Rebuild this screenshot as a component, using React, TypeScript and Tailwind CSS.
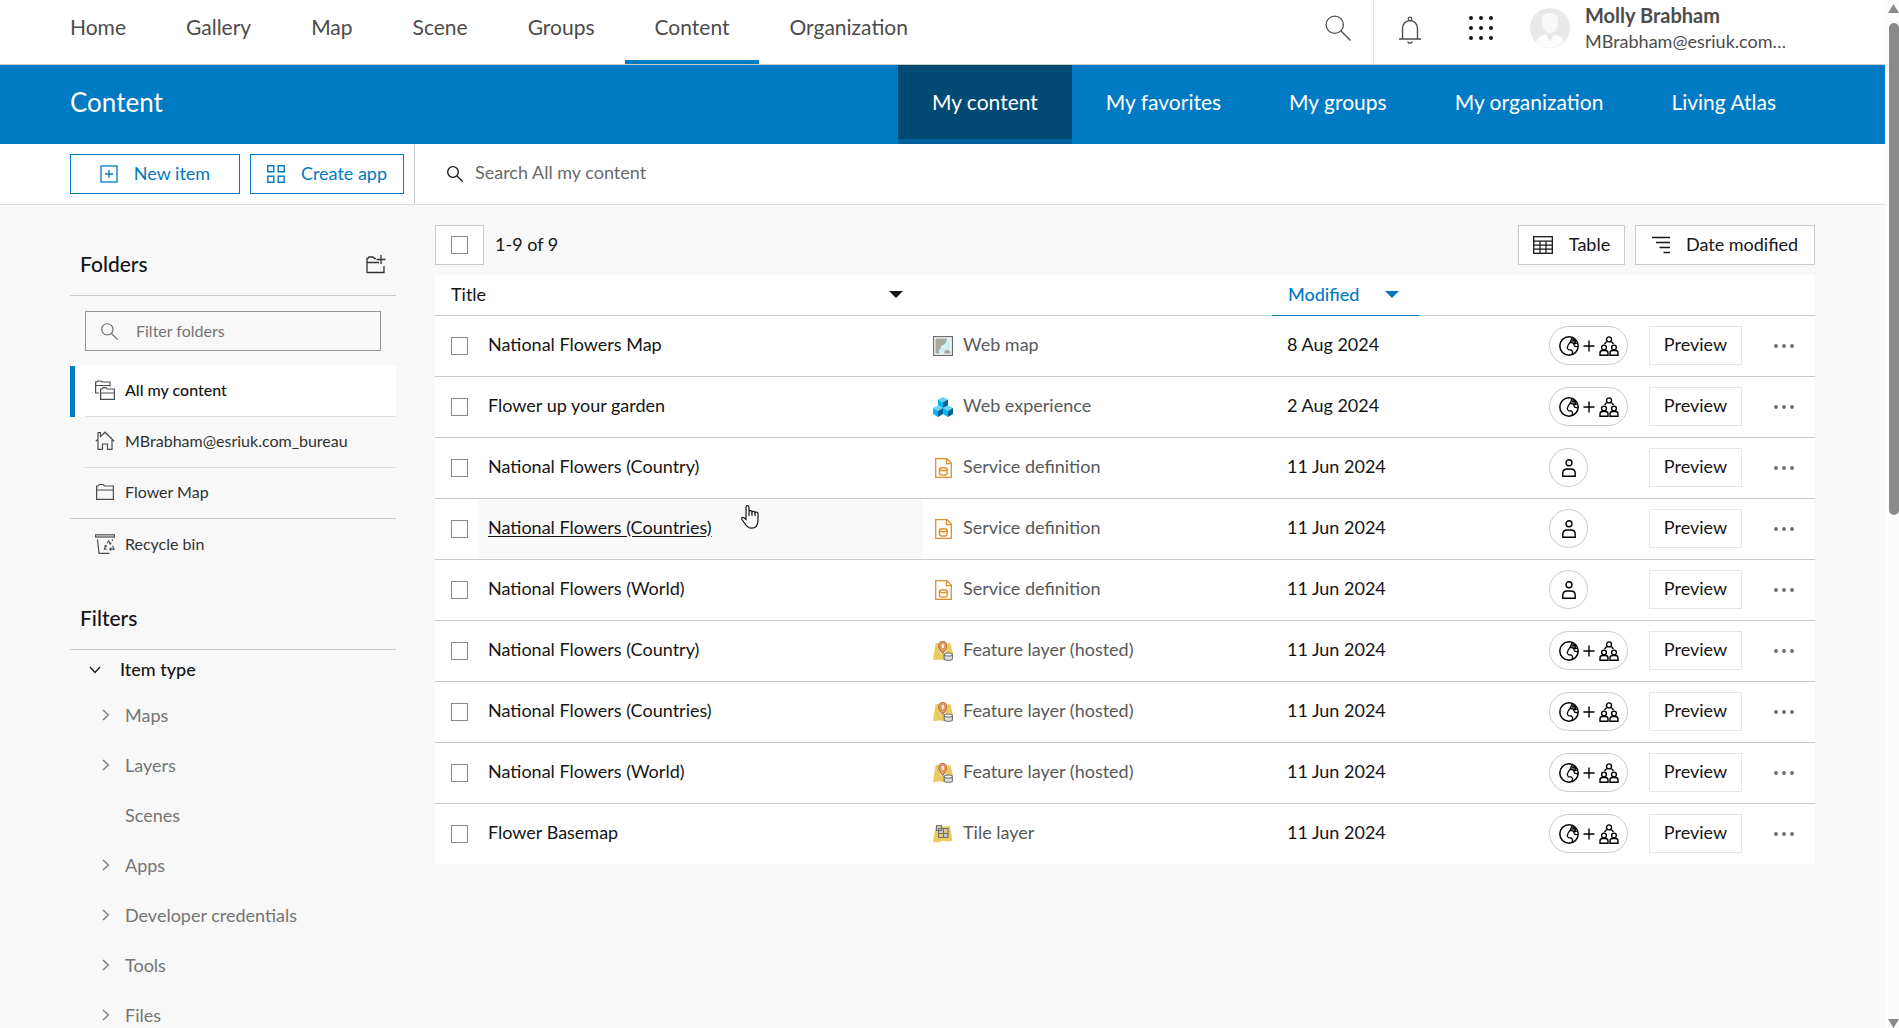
import type { ReactNode } from "react";

type ItemKind = "Web map" | "Web experience" | "Service definition" | "Feature layer (hosted)" | "Tile layer";

interface Item {
  title: string;
  kind: ItemKind;
  modified: string;
  shared: boolean;
  hovered?: boolean;
}

const items: Item[] = [
  { title: "National Flowers Map", kind: "Web map", modified: "8 Aug 2024", shared: true },
  { title: "Flower up your garden", kind: "Web experience", modified: "2 Aug 2024", shared: true },
  { title: "National Flowers (Country)", kind: "Service definition", modified: "11 Jun 2024", shared: false },
  { title: "National Flowers (Countries)", kind: "Service definition", modified: "11 Jun 2024", shared: false, hovered: true },
  { title: "National Flowers (World)", kind: "Service definition", modified: "11 Jun 2024", shared: false },
  { title: "National Flowers (Country)", kind: "Feature layer (hosted)", modified: "11 Jun 2024", shared: true },
  { title: "National Flowers (Countries)", kind: "Feature layer (hosted)", modified: "11 Jun 2024", shared: true },
  { title: "National Flowers (World)", kind: "Feature layer (hosted)", modified: "11 Jun 2024", shared: true },
  { title: "Flower Basemap", kind: "Tile layer", modified: "11 Jun 2024", shared: true },
];

const siteLinks = ["Home", "Gallery", "Map", "Scene", "Groups", "Content", "Organization"];
const contentTabs = ["My content", "My favorites", "My groups", "My organization", "Living Atlas"];

const itemTypes = [
  { label: "Maps", expandable: true },
  { label: "Layers", expandable: true },
  { label: "Scenes", expandable: false },
  { label: "Apps", expandable: true },
  { label: "Developer credentials", expandable: true },
  { label: "Tools", expandable: true },
  { label: "Files", expandable: true },
];

function Svg({ box, className, children }: { box: string; className: string; children: ReactNode }) {
  return (
    <svg viewBox={box} className={`shrink-0 ${className}`} fill="none" stroke="currentColor" aria-hidden="true">
      {children}
    </svg>
  );
}

const MagnifierIcon = ({ className, weight = 1.2 }: { className: string; weight?: number }) => (
  <Svg box="0 0 24 24" className={className}>
    <circle cx="9" cy="9" r="8" strokeWidth={weight} />
    <path d="M14.8 14.8 23.5 23.5" strokeWidth={weight} />
  </Svg>
);

const BellIcon = () => (
  <Svg box="0 0 24 28" className="h-7 w-6">
    <path d="M1 23h22M4.5 23V12.5a7.5 8 0 0 1 15 0V23" strokeWidth="1.4" />
    <circle cx="12" cy="3" r="1.8" strokeWidth="1.2" />
    <path d="M10 25.5a2 1.6 0 0 0 4 0" strokeWidth="1.4" />
  </Svg>
);

const AppGridIcon = () => (
  <Svg box="0 0 26 26" className="h-[26px] w-[26px]">
    {[3, 13, 23].map((y) =>
      [3, 13, 23].map((x) => <circle key={`${x}-${y}`} cx={x} cy={y} r="2" fill="currentColor" stroke="none" />),
    )}
  </Svg>
);

const Avatar = () => (
  <Svg box="0 0 40 40" className="h-10 w-10">
    <circle cx="20" cy="20" r="20" fill="#e9e9e9" stroke="none" />
    <path d="M12 14c-1-6 3-9 8-9s9 3 8 9c0 6-3 11-8 11s-8-5-8-11Z" fill="#f8f8f8" stroke="none" />
    <path d="M6 34c1-5 5-6 10-8l4 8 4-8c5 2 9 3 10 8a20 20 0 0 1-28 0Z" fill="#fcfcfc" stroke="none" />
  </Svg>
);

const PlusSquareIcon = () => (
  <Svg box="0 0 18 18" className="h-[18px] w-[18px]">
    <rect x="1" y="1" width="16" height="16" strokeWidth="1.3" />
    <path d="M9 5v8M5 9h8" strokeWidth="1.3" />
  </Svg>
);

const TilesIcon = () => (
  <Svg box="0 0 18 18" className="h-[18px] w-[18px]">
    <path d="M.8.8h6v6h-6zM11.2.8h6v6h-6zM.8 11.2h6v6h-6zM11.2 11.2h6v6h-6z" strokeWidth="1.4" />
  </Svg>
);

const NewFolderIcon = () => (
  <Svg box="0 0 20 20" className="h-5 w-5">
    <path d="M10 4.5H8.5L7 3H3L2 4.5H1v14h17V12M1.5 8.5H13" strokeWidth="1.3" />
    <path d="M15 1v9M10.5 5.5h9" strokeWidth="1.3" />
  </Svg>
);

const FoldersIcon = () => (
  <Svg box="0 0 20 20" className="h-5 w-5">
    <path d="M4 13H.6V2H2l1-1h3l1 1h8v4.5M.6 5.5H15" strokeWidth="1.2" />
    <path d="M5.6 19.4V9H7l1-1.4h3L12 9h7.4v10.4zM5.6 13h13.8" strokeWidth="1.2" />
  </Svg>
);

const HomeIcon = () => (
  <Svg box="0 0 20 20" className="h-5 w-5">
    <path d="m.8 10.2 2.2-2V1.6h2.5v4L10 1.2l9.2 9M3 9v9.4h4.5V13h5v5.4H17V9" strokeWidth="1.2" />
  </Svg>
);

const FolderIcon = () => (
  <Svg box="0 0 20 20" className="h-5 w-5">
    <path d="M1.6 17.4V4H3l1.2-1.5h4L9.5 4h8.9v13.4zM1.6 8h16.8" strokeWidth="1.2" />
  </Svg>
);

const RecycleBinIcon = () => (
  <Svg box="0 0 20 20" className="h-5 w-5">
    <rect x=".6" y=".8" width="18.8" height="2.2" strokeWidth="1.2" />
    <path d="M2.5 5.5 4 19.4h10.5M17.4 5.5V7" strokeWidth="1.2" />
    <path
      d="m12 9.2 1.6-2.2 1.8 2.6M16 8.6l-.4 1.4-1.5-.3M10.6 11.5l-1.2 3.6h2.2M9.4 12.5l1.4-1 1 1.3M17.5 11.8l1.6 3.3h-4.3M16.2 13.6l-1.4 1.5 1.4 1.6"
      strokeWidth="1.1"
    />
  </Svg>
);

const ChevronRightIcon = () => (
  <Svg box="0 0 8 12" className="h-3 w-2">
    <path d="m1 1 5.5 5L1 11" strokeWidth="1.2" />
  </Svg>
);

const ChevronDownIcon = () => (
  <Svg box="0 0 12 8" className="h-2 w-3">
    <path d="m1 1 5 5.5L11 1" strokeWidth="1.2" />
  </Svg>
);

const CaretIcon = () => (
  <Svg box="0 0 14 7" className="h-[7px] w-[14px]">
    <path d="M0 0h14L7 7z" fill="currentColor" stroke="none" />
  </Svg>
);

const TableIcon = () => (
  <Svg box="0 0 20 18" className="h-[18px] w-5">
    <rect x=".7" y=".7" width="18.6" height="16.6" strokeWidth="1.3" />
    <path d="M1 5.2h18M1 9.2h18M1 13.2h18M7 5v12M13 5v12" strokeWidth="1.2" />
  </Svg>
);

const SortIcon = () => (
  <Svg box="0 0 18 18" className="h-[18px] w-[18px]">
    <path d="M0 1.5h18M4 6.5h14M7.5 11.5H18M11.5 16.5H18" strokeWidth="1.3" />
  </Svg>
);

const GlobeIcon = () => (
  <Svg box="0 0 20 20" className="h-5 w-5">
    <circle cx="10" cy="10" r="9.2" strokeWidth="1.5" />
    <path
      d="M13 1.8 11.2 6.2 9.4 8.6l-1.2 3.2 1.2 1.9 3.2.4 1.2 2-1.4 3M11.4 6.4l3 .8 1.2 3 3.4.6M13.4 4.4l3.4-.4M15 3l1.6 3.2-2 2L18.600 7"
      strokeWidth="1.2"
    />
    <path d="m13 1.400 4.200 3-2 3-3.600-.8z" fill="currentColor" fillOpacity=".6" stroke="none" />
  </Svg>
);

const GroupIcon = () => (
  <Svg box="0 0 20 20" className="h-5 w-5">
    <circle cx="10" cy="3.4" r="2.5" strokeWidth="1.4" />
    <path d="m7.5 5.8-2 2.2M12.5 5.8l2 2.2" strokeWidth="1.3" />
    <circle cx="5" cy="11.5" r="2.4" strokeWidth="1.4" />
    <circle cx="15" cy="11.5" r="2.4" strokeWidth="1.4" />
    <path
      d="M1 19.3v-2.2q0-2.6 2.5-2.6h3Q9 14.5 9 17.1v2.2zM11 19.3v-2.2q0-2.6 2.5-2.6h3q2.5 0 2.5 2.6v2.2z"
      strokeWidth="1.4"
    />
  </Svg>
);

const PersonIcon = () => (
  <Svg box="0 0 14 18" className="h-[18px] w-[14px]">
    <circle cx="7" cy="3.8" r="3" strokeWidth="1.4" />
    <path d="M.8 17.2v-3q0-4.2 4.2-4.2h4q4.2 0 4.2 4.2v3z" strokeWidth="1.4" />
  </Svg>
);

const MoreIcon = () => (
  <Svg box="0 0 20 4" className="h-1 w-5">
    {[2, 10, 18].map((x) => (
      <circle key={x} cx={x} cy="2" r="1.9" fill="currentColor" stroke="none" />
    ))}
  </Svg>
);

const HandIcon = () => (
  <svg viewBox="0 0 18 24" className="pointer-events-none absolute top-[6px] left-[263px] h-6 w-[18px]" aria-hidden="true">
    <path
      d="M5 14.5V2.2c0-2 3-2 3 0V6.5c.6-1.3 2.9-1 3 .5.7-1.2 2.9-.9 3 .6.8-.9 3-.6 3 1.2v6.4c0 5-2.5 8-6.5 8-3.5 0-5-2-6.7-4.7L1 14.5c-1-2 1-2.8 2-1.7z"
      fill="#fff"
      stroke="#151515"
      strokeWidth="1.2"
    />
    <path d="M8 6.5V11M11 7v4M14 7.6V11" stroke="#151515" strokeWidth="1.2" />
  </svg>
);

function KindIcon({ kind }: { kind: ItemKind }) {
  switch (kind) {
    case "Web map":
      return (
        <Svg box="0 0 20 20" className="h-5 w-5">
          <rect x=".6" y=".6" width="18.8" height="18.8" fill="#fff" stroke="#6e6e6e" strokeWidth="1.2" />
          <path d="M2.5 2.5h15v15h-15z" fill="#d2eef5" stroke="none" />
          <path d="M2.5 2.5H14l-1 4-3 2.5-2 1-.5 3-2 1 1 3.5h-4z" fill="#a5aa9e" stroke="none" />
          <path d="m11 17.5 1-3 2.5-1 3 2v2z" fill="#a5aa9e" stroke="none" />
        </Svg>
      );
    case "Web experience":
      return (
        <Svg box="0 0 20 20" className="h-5 w-5">
          {[
            [5, 0],
            [0, 8.6],
            [10, 8.6],
          ].map(([x, y]) => (
            <g key={`${x}-${y}`} transform={`translate(${x} ${y})`} stroke="none">
              <path d="m5 0 5 2.5-5 2.8L0 2.5z" fill="#6fd0f7" />
              <path d="m0 2.5 5 2.8v6L0 8.5z" fill="#00b9f2" />
              <path d="m10 2.5-5 2.8v6l5-2.8z" fill="#00619b" />
            </g>
          ))}
        </Svg>
      );
    case "Service definition":
      return (
        <Svg box="0 0 20 20" className="h-5 w-5">
          <path d="M2.7.7H14l4.3 4.3v14.3H2.7zM13.5.7v5h4.8" fill="#fffdf8" stroke="#dd8f32" strokeWidth="1.3" />
          <ellipse cx="10.3" cy="11.2" rx="3.8" ry="1.5" stroke="#dd8f32" strokeWidth="1.4" />
          <path d="M6.5 11.2v4.3c0 2.2 7.6 2.2 7.6 0v-4.3" stroke="#dd8f32" strokeWidth="1.4" />
        </Svg>
      );
    case "Feature layer (hosted)":
      return (
        <Svg box="0 0 20 20" className="h-5 w-5">
          <path d="M2.5 2.5 5 1.5l2.5 11 4.500 0 3-10.500 2.500.5L20 13l-9 6-4-.6-7 .6z" fill="#e9cb5f" stroke="none" />
          <path
            d="M9.7.5c2.6 0 4 1.5 4 4 0 3-1.5 5-4 8-2.5-3-4-5-4-8 0-2.5 1.4-4 4-4Z"
            fill="#e09a66"
            stroke="#b0662f"
            strokeWidth="1"
          />
          <path d="M8.8 3H11v4H8.8z" fill="#f7e7dc" stroke="none" />
          <path d="M11.200 13.500v4.500c0 1.700 8.200 1.700 8.200 0v-4.500z" fill="#dcdcdc" stroke="#6f6f6f" strokeWidth="1.1" />
          <ellipse cx="15.3" cy="13.5" rx="4.1" ry="1.5" fill="#f4f4f4" stroke="#6f6f6f" strokeWidth="1.1" />
        </Svg>
      );
    default:
      return (
        <Svg box="0 0 20 20" className="h-5 w-5">
          <path d="m2.5 3 5-1 5 .6 4.5-1L19.5 17l-5 .6-5-.8-4 1.7-5.5-.5z" fill="#e9cb5f" stroke="none" />
          <path
            d="M3.5 1.5h5v5h-5zM5.500 4.500h5v5h-5v4h5v-4h4.500v4h-9.500v-9M10.500 4.500h4.500v5M10.500 9.500v4"
            fill="#c9c9c9"
            stroke="#6f6f6f"
            strokeWidth="1.1"
          />
        </Svg>
      );
  }
}

function Check({ label }: { label: string }) {
  return (
    <input
      type="checkbox"
      aria-label={label}
      className="block h-[18px] w-[17px] appearance-none border border-[#8a8a8a] bg-white"
    />
  );
}

function SiteHeader() {
  return (
    <header className="flex h-[65px] shrink-0 items-stretch border-b border-[#cacaca] bg-white pl-10 text-[#4c4c4c]">
      <nav className="flex text-[21px]">
        {siteLinks.map((label) => (
          <a
            key={label}
            href="#"
            className={`flex items-center border-b-4 px-[30px] pb-[6px] ${label === "Content" ? "border-[#007ac2]" : "border-transparent"}`}
          >
            {label}
          </a>
        ))}
      </nav>
      <div className="ml-auto flex items-center">
        <button aria-label="Search" className="flex h-full items-center border-r border-[#dfdfdf] pr-[22px] pb-2">
          <MagnifierIcon className="h-[26px] w-[26px]" />
        </button>
        <button aria-label="Notifications" className="mb-1 ml-6">
          <BellIcon />
        </button>
        <button aria-label="Apps" className="mb-2 ml-[46px] text-[#151515]">
          <AppGridIcon />
        </button>
        <button className="mb-2 ml-9 flex w-[355px] items-center gap-[15px] text-left">
          <Avatar />
          <span className="leading-[26px]">
            <span className="block text-[20px] font-bold">Molly Brabham</span>
            <span className="block text-[18px]">MBrabham@esriuk.com…</span>
          </span>
        </button>
      </div>
    </header>
  );
}

function ContentBar() {
  return (
    <div className="flex h-[79px] shrink-0 items-stretch justify-between bg-[#007ac2] pr-[75px] pl-[70px] text-white">
      <h1 className="self-center pb-1 text-[26px]">Content</h1>
      <nav className="flex text-[21px]">
        {contentTabs.map((label) => (
          <a
            key={label}
            href="#"
            className={`flex items-center border-b-[5px] px-[34px] ${
              label === "My content" ? "border-[#00619b] bg-[#004a74]" : "border-transparent"
            }`}
          >
            {label}
          </a>
        ))}
      </nav>
    </div>
  );
}

function ActionBar() {
  return (
    <div className="flex h-[61px] shrink-0 items-stretch border-b border-[#dfdfdf] bg-white pl-[70px] text-[18px]">
      <div className="flex items-center gap-[10px] border-r border-[#cacaca] pr-[10px]">
        <button className="flex h-10 w-[170px] items-center justify-center gap-4 border border-[#007ac2] text-[#007ac2]">
          <PlusSquareIcon />
          <span className="pb-[2px]">New item</span>
        </button>
        <button className="flex h-10 w-[154px] items-center justify-center gap-4 border border-[#007ac2] text-[#007ac2]">
          <TilesIcon />
          <span className="pb-[2px]">Create app</span>
        </button>
      </div>
      <label className="flex flex-1 items-center gap-3 pb-1 pl-8 text-[#151515]">
        <MagnifierIcon className="mt-1 h-4 w-4" weight={2} />
        <input
          type="search"
          placeholder="Search All my content"
          className="flex-1 bg-transparent outline-none placeholder:text-[#6a6a6a] placeholder:opacity-100"
        />
      </label>
    </div>
  );
}

function Sidebar() {
  return (
    <aside className="w-[326px] shrink-0">
      <div className="flex h-[91px] items-center justify-between border-b border-[#cacaca] px-[10px] pt-7">
        <h2 className="text-[21px] font-medium text-[#151515]">Folders</h2>
        <button aria-label="Create folder" className="text-[#323232]">
          <NewFolderIcon />
        </button>
      </div>
      <div className="px-[15px] py-[15px]">
        <label className="flex h-10 items-center gap-[18px] border border-[#949494] px-[15px] text-[#6a6a6a]">
          <MagnifierIcon className="h-[17px] w-[17px]" weight={1.6} />
          <input
            type="text"
            placeholder="Filter folders"
            className="w-full bg-transparent text-[16px] outline-none placeholder:text-[#757575] placeholder:opacity-100"
          />
        </label>
      </div>
      <nav className="text-[16px] text-[#4c4c4c]">
        <div className="border-l-[5px] border-[#007ac2] bg-white">
          <a href="#" className="ml-[10px] flex h-[51px] items-center gap-[10px] border-b border-[#dfdfdf] pb-[2px] pl-[10px]">
            <FoldersIcon />
            <span className="font-medium text-[#151515]">All my content</span>
          </a>
        </div>
        <a href="#" className="ml-[15px] flex h-[51px] items-center gap-[10px] border-b border-[#dfdfdf] pb-[2px] pl-[10px]">
          <HomeIcon />
          <span className="text-[#323232]">MBrabham@esriuk.com_bureau</span>
        </a>
        <a href="#" className="flex h-[51px] items-center gap-[10px] border-b border-[#cacaca] pb-[2px] pl-[25px]">
          <FolderIcon />
          <span className="text-[#323232]">Flower Map</span>
        </a>
        <a href="#" className="flex h-[51px] items-center gap-[10px] pb-[2px] pl-[25px]">
          <RecycleBinIcon />
          <span className="text-[#323232]">Recycle bin</span>
        </a>
      </nav>
      <div className="mt-5 flex h-[60px] items-center border-b border-[#cacaca] px-[10px] pb-1">
        <h2 className="text-[21px] font-medium text-[#151515]">Filters</h2>
      </div>
      <button className="flex h-10 items-center gap-[19px] pl-[19px] text-[18px] font-medium text-[#151515]">
        <ChevronDownIcon />
        <span className="pb-[2px]">Item type</span>
      </button>
      <ul className="text-[18px] text-[#757575]">
        {itemTypes.map(({ label, expandable }) => (
          <li key={label}>
            <button className="flex h-[50px] items-center gap-[15px] pl-8">
              {expandable ? <ChevronRightIcon /> : <span className="w-2" />}
              {label}
            </button>
          </li>
        ))}
      </ul>
    </aside>
  );
}

function Sharing({ shared }: { shared: boolean }) {
  return shared ? (
    <span className="flex h-[39px] w-[79px] items-center justify-center gap-1 rounded-full border border-[#cacaca] text-black">
      <GlobeIcon />
      <Svg box="0 0 12 12" className="h-3 w-3">
        <path d="M6 .5v11M.5 6h11" strokeWidth="1.4" />
      </Svg>
      <GroupIcon />
    </span>
  ) : (
    <span className="flex h-[39px] w-[39px] items-center justify-center rounded-full border border-[#cacaca] text-black">
      <PersonIcon />
    </span>
  );
}

function ItemTable() {
  return (
    <table className="mt-[10px] w-full table-fixed border-collapse bg-white text-left text-[18px] text-[#151515]">
      <colgroup>
        <col className="w-[43px]" />
        <col className="w-[445px]" />
        <col />
        <col className="w-[147px]" />
        <col className="w-[130px]" />
        <col className="w-[100px]" />
        <col className="w-[105px]" />
        <col className="w-[61px]" />
      </colgroup>
      <thead>
        <tr className="h-10 border-b border-[#cacaca]">
          <th colSpan={2} className="pr-5 pl-4 font-normal">
            <button className="flex w-full items-center justify-between">
              Title
              <CaretIcon />
            </button>
          </th>
          <th />
          <th className="border-b border-[#007ac2] pl-4 font-medium text-[#007ac2]">
            <button className="flex items-center gap-[26px]">
              Modified
              <CaretIcon />
            </button>
          </th>
          <th colSpan={4} />
        </tr>
      </thead>
      <tbody>
        {items.map((item, index) => (
          <tr key={index} className="h-[61px] border-b border-[#cacaca] last:border-b-0">
            <td className="pl-4">
              <Check label={`Select ${item.title}`} />
            </td>
            <td className={`relative pb-[3px] pl-[10px] ${item.hovered ? "bg-[#f9f9f9]" : ""}`}>
              <a href="#" className={item.hovered ? "underline underline-offset-2" : ""}>
                {item.title}
              </a>
              {item.hovered && <HandIcon />}
            </td>
            <td className="pl-[10px]">
              <span className="flex items-center gap-[10px] text-[#595959]">
                <KindIcon kind={item.kind} />
                <span className="pb-[2px]">{item.kind}</span>
              </span>
            </td>
            <td className="pb-[3px] pl-[15px]">{item.modified}</td>
            <td />
            <td>
              <Sharing shared={item.shared} />
            </td>
            <td>
              <button className="h-[39px] w-[93px] border border-[#e6e6e6] pb-[3px]">Preview</button>
            </td>
            <td className="pl-5">
              <button aria-label={`More options for ${item.title}`} className="flex text-[#6a6a6a]">
                <MoreIcon />
              </button>
            </td>
          </tr>
        ))}
      </tbody>
    </table>
  );
}

function Scrollbar() {
  return (
    <div className="flex w-[14px] shrink-0 flex-col items-end bg-[#fcfcfc] pt-1 text-[#8a8a8a]">
      <Svg box="0 0 11 9" className="h-[9px] w-[11px]">
        <path d="M5.5 0 11 9H0z" fill="currentColor" stroke="none" />
      </Svg>
      <div className="mt-[10px] h-[48%] w-[10px] rounded-full bg-[#8a8a8a]" />
      <Svg box="0 0 11 9" className="mt-auto h-[9px] w-[11px]">
        <path d="M5.5 9 11 0H0z" fill="currentColor" stroke="none" />
      </Svg>
    </div>
  );
}

export default function App() {
  return (
    <div className="flex h-screen overflow-hidden bg-[#f8f8f8] [font-family:Lato,'Noto_Sans',sans-serif]">
      <div className="flex min-w-0 flex-1 flex-col overflow-hidden">
        <SiteHeader />
        <ContentBar />
        <ActionBar />
        <div className="flex items-start gap-[39px] px-[70px]">
          <Sidebar />
          <main className="min-w-0 flex-1 pt-5">
            <div className="flex items-center text-[18px] text-[#151515]">
              <div className="flex h-10 w-[49px] items-center justify-center border border-[#cacaca] bg-white">
                <Check label="Select all items" />
              </div>
              <span className="ml-[11px] pb-[2px]">1-9 of 9</span>
              <button className="ml-auto flex h-10 w-[107px] items-center justify-center gap-4 border border-[#cacaca] bg-white">
                <TableIcon />
                <span className="pb-[2px]">Table</span>
              </button>
              <button className="ml-[10px] flex h-10 w-[180px] items-center justify-center gap-4 border border-[#cacaca] bg-white">
                <SortIcon />
                <span className="pb-[2px]">Date modified</span>
              </button>
            </div>
            <ItemTable />
          </main>
        </div>
      </div>
      <Scrollbar />
    </div>
  );
}
